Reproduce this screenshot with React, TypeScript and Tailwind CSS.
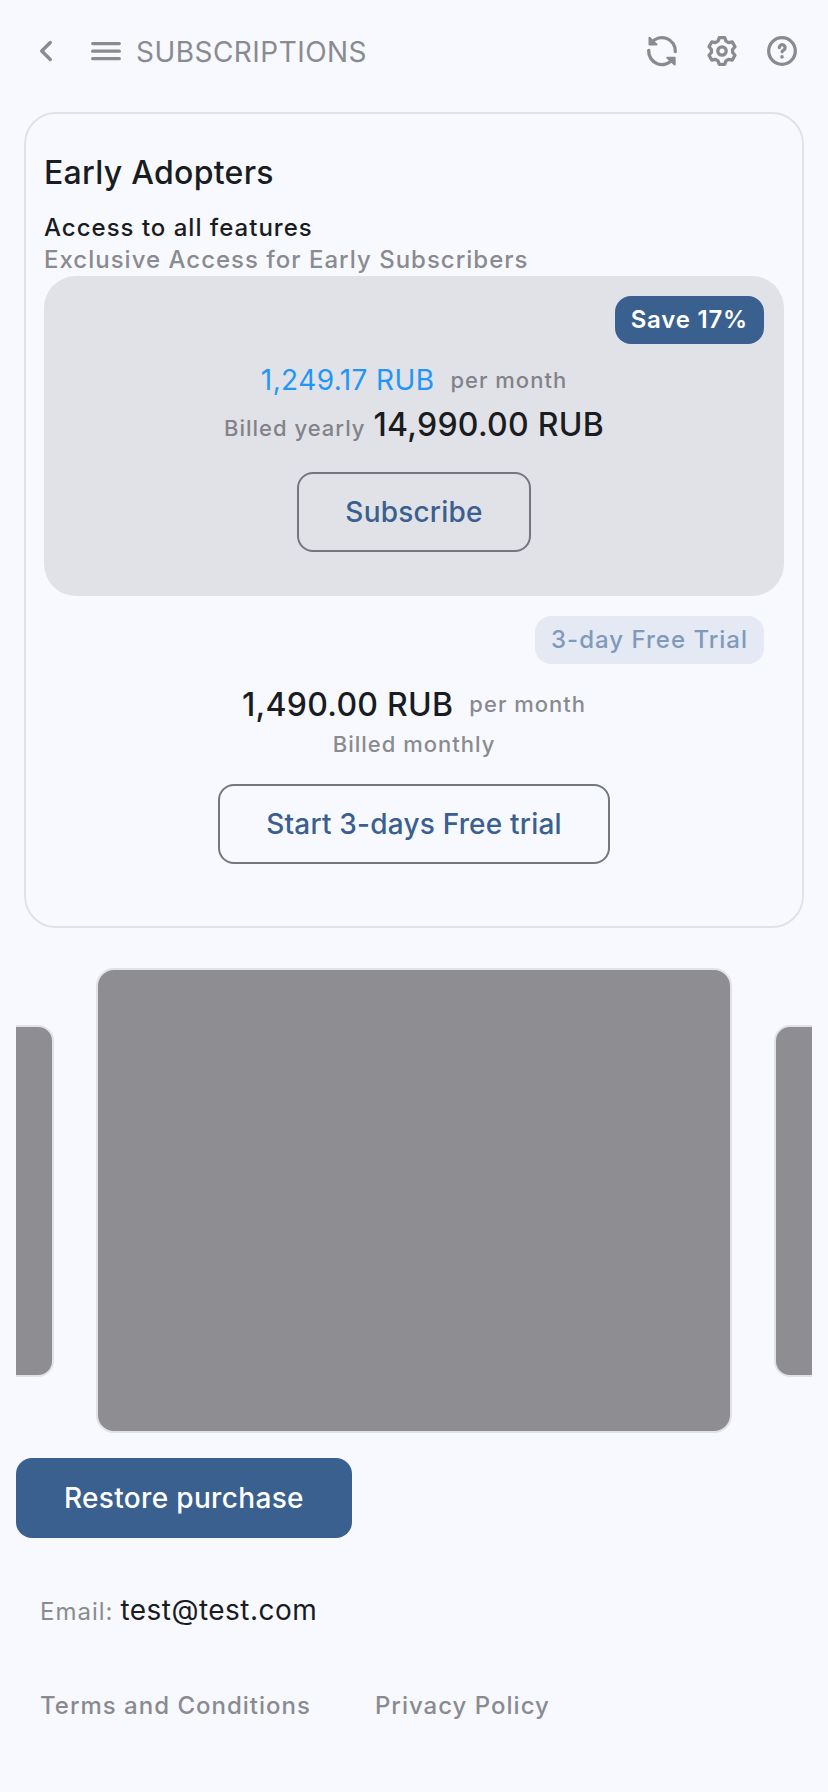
import { type ReactNode } from "react";

type PlanProps = {
  badge: ReactNode;
  children: ReactNode;
  action: string;
  highlighted?: boolean;
};

function BackIcon() {
  return (
    <svg width="36" height="36" viewBox="0 0 36 36" fill="none" stroke="currentColor" strokeWidth="3.4" strokeLinecap="round" strokeLinejoin="round">
      <path d="M22.3 9.5 13.7 18l8.6 8.5" />
    </svg>
  );
}

function MenuIcon() {
  return (
    <svg width="36" height="36" viewBox="0 0 36 36" fill="none" stroke="currentColor" strokeWidth="3.3" strokeLinecap="round">
      <path d="M4.7 10.6h26.6M4.7 18.2h26.6M4.7 25.7h26.6" />
    </svg>
  );
}

function RefreshIcon() {
  return (
    <svg width="36" height="36" viewBox="0 0 36 36" fill="none" stroke="currentColor" strokeWidth="3.3" strokeLinecap="round" strokeLinejoin="round">
      <path d="M31.3 18.7A13.3 13.3 0 0 0 7.6 9.6" />
      <path d="M5.5 4.8v6.6h7z" fill="currentColor" strokeWidth="2" />
      <path d="M4.7 17.5A13.3 13.3 0 0 0 28.4 26.5" />
      <path d="M30.7 31.5v-6.8h-7.4z" fill="currentColor" strokeWidth="2" />
    </svg>
  );
}

function GearIcon() {
  return (
    <svg width="36" height="36" viewBox="-18 -18 36 36" fill="none" stroke="currentColor" strokeWidth="3.3" strokeLinejoin="round">
      <path d="M-4-9.9-2.8-13.3H2.8L4-9.9 6.57-8.41 10.2-9.12 13-4.28 10.57-1.49V1.49L13 4.28 10.2 9.12 6.57 8.41 4 9.9 2.8 13.3H-2.8L-4 9.9-6.57 8.41-10.2 9.12-13 4.28-10.57 1.49V-1.49L-13-4.28-10.2-9.12-6.57-8.41z" />
      <circle r="4.2" />
    </svg>
  );
}

function HelpIcon() {
  return (
    <svg width="36" height="36" viewBox="0 0 36 36" fill="none" stroke="currentColor" strokeWidth="3.3" strokeLinecap="round" strokeLinejoin="round">
      <circle cx="18" cy="18" r="13.3" />
      <path d="M15.3 14.6a2.9 2.9 0 1 1 4.4 2.5c-1 .6-1.6 1-1.6 1.7" />
      <circle cx="18" cy="23.9" r="1.8" fill="currentColor" stroke="none" />
    </svg>
  );
}

function Plan({ badge, children, action, highlighted }: PlanProps) {
  return (
    <section className={`flex flex-col items-center rounded-[32px] px-5 pt-5 pb-11 ${highlighted ? "bg-[#e1e2e8]" : ""}`}>
      <div className="mb-4 flex w-full justify-end">{badge}</div>
      {children}
      <button className="mt-6 h-20 rounded-2xl border-2 border-[#73777f] px-[46px] text-[28px] font-medium tracking-[0.2px] text-[#3a608f]">
        {action}
      </button>
    </section>
  );
}

export default function App() {
  return (
    <div className="min-h-[1792px] w-[828px] overflow-hidden bg-[#f8f9ff] font-[Inter,sans-serif] text-[#191c20]">
      <header className="flex h-[102px] items-center px-7 text-[#8a8b90]">
        <BackIcon />
        <div className="ml-6 flex items-center gap-3">
          <MenuIcon />
          <h1 className="pt-0.5 text-[28px] leading-10 tracking-[0.46px]">SUBSCRIPTIONS</h1>
        </div>
        <div className="ml-auto flex gap-6">
          <RefreshIcon />
          <GearIcon />
          <HelpIcon />
        </div>
      </header>

      <main className="px-4">
        <div className="mx-2 mt-2.5 h-[816px] rounded-[32px] border-2 border-[#e1e2e8] px-[18px] pt-[35px]">
          <h2 className="text-[32px] leading-[48px] font-medium tracking-[0.28px]">Early Adopters</h2>
          <p className="mt-[15px] text-2xl leading-8 font-medium tracking-[1px]">Access to all features</p>
          <p className="text-2xl leading-8 font-medium tracking-[1px] text-[#8a8b90]">Exclusive Access for Early Subscribers</p>

          <Plan
            highlighted
            action="Subscribe"
            badge={<span className="h-12 rounded-2xl bg-[#3a608f] px-4 text-2xl leading-[48px] font-semibold tracking-[0.8px] text-white">Save 17%</span>}
          >
            <div className="flex h-10 items-center gap-4">
              <span className="text-[28px] tracking-[0.4px] text-[#2296f8]">1,249.17 RUB</span>
              <span className="text-[22px] font-medium tracking-[1px] text-[#828388]">per month</span>
            </div>
            <div className="flex h-12 items-baseline gap-2 pt-px">
              <span className="text-[22px] font-medium tracking-[1px] text-[#828388]">Billed yearly</span>
              <span className="text-[32px] leading-[48px] font-medium tracking-[0.28px]">14,990.00 RUB</span>
            </div>
          </Plan>

          <Plan
            action="Start 3-days Free trial"
            badge={<span className="h-12 rounded-2xl bg-[#e4e9f4] px-4 text-2xl leading-[48px] font-medium tracking-[1px] text-[#7f9aba]">3-day Free Trial</span>}
          >
            <div className="flex h-12 items-center gap-4">
              <span className="pt-0.5 text-[32px] font-medium tracking-[0.28px]">1,490.00 RUB</span>
              <span className="text-[22px] font-medium tracking-[1px] text-[#8a8b90]">per month</span>
            </div>
            <p className="text-[22px] leading-8 font-medium tracking-[1px] text-[#8a8b90]">Billed monthly</p>
          </Plan>
        </div>

        <div className="mt-10 flex h-[465px] items-center justify-center gap-[42px] overflow-hidden">
          <div className="h-[352px] w-[482px] shrink-0 rounded-2xl border-2 border-[#e1e2e8] bg-[#8e8d92]" />
          <div className="h-[465px] w-[636px] shrink-0 rounded-[18px] border-2 border-[#e1e2e8] bg-[#8e8d92]" />
          <div className="h-[352px] w-[482px] shrink-0 rounded-2xl border-2 border-[#e1e2e8] bg-[#8e8d92]" />
        </div>

        <button className="mt-[25px] block h-20 rounded-2xl bg-[#3a608f] px-12 text-[28px] font-medium tracking-[0.33px] text-white">
          Restore purchase
        </button>

        <div className="mt-12 ml-6 flex h-12 items-baseline gap-[7px]">
          <span className="text-2xl tracking-[1px] text-[#8a8b90]">Email:</span>
          <span className="text-[28px] leading-[48px] tracking-[0.46px]">test@test.com</span>
        </div>

        <footer className="mt-14 ml-6 flex gap-16 text-2xl leading-8 font-medium tracking-[1px] text-[#8a8b90]">
          <a>Terms and Conditions</a>
          <a>Privacy Policy</a>
        </footer>
      </main>
    </div>
  );
}
